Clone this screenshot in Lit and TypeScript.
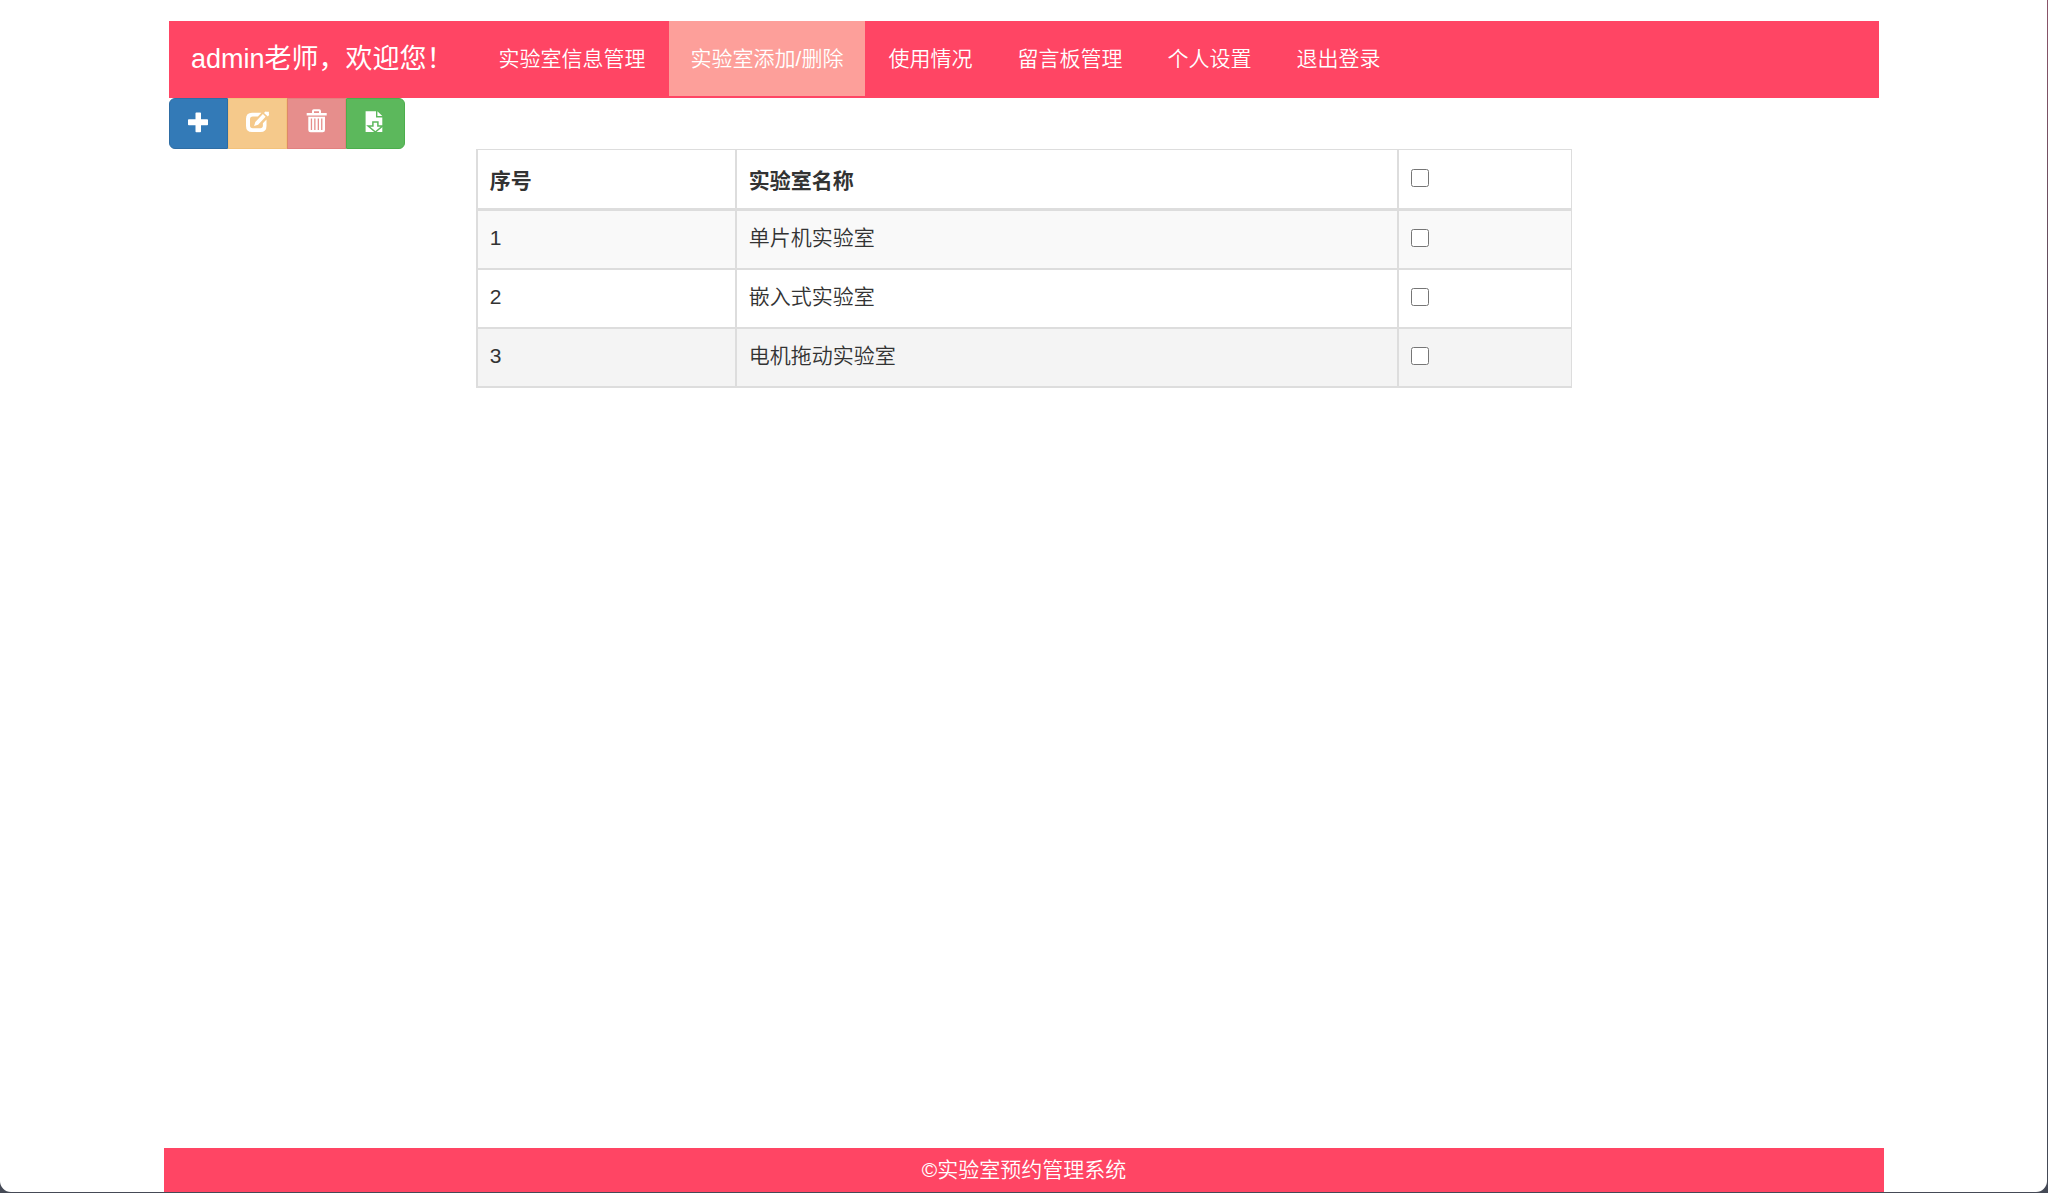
import { LitElement, html, svg, css } from "lit";
import { customElement, state } from "lit/decorators.js";

interface Lab {
  id: number;
  name: string;
}

const LABS: Lab[] = [
  { id: 1, name: "单片机实验室" },
  { id: 2, name: "嵌入式实验室" },
  { id: 3, name: "电机拖动实验室" },
];

const NAV = ["实验室信息管理", "实验室添加/删除", "使用情况", "留言板管理", "个人设置", "退出登录"];

const ICONS = {
  plus: svg`<path d="M8.3 3.5h3.9q.8 0 .8.8v6h6.200q.8 0 .8.8v4.400q0 .8-.8.8H13v6.100q0 .8-.8.8H8.300q-.8 0-.8-.8v-6.100H.8q-.8 0-.8-.8v-4.400q0-.8.8-.8h6.700v-6q0-.8.8-.8z"/>`,
  edit: svg`<path fill-rule="evenodd" d="M5 3.700h9.400l-3.500 3.700H5.800Q3 7.400 3 10.200v6.300q0 2.700 2.800 2.700h7.400q2.700 0 2.700-2.700v-2.200l3.600-3.700V17q0 6-6 6H5q-6 0-6-6V9.700q0-6 6-6z"/><path d="M15.300 5.300l2.700 2.600-7.500 8-4 1.300 1.200-4zM16.400 4.200l1.200-1.200q.6-.6 1.300 0h2.400v2.100q.6.7 0 1.300l-1.100 1.300z" transform="translate(.6 -.2)"/>`,
  trash: svg`<path fill-rule="evenodd" d="M.7 4h5.300V2Q6 .2 7.800.2h5.400Q15 .2 15 2v2h5.700v2.500H.7zM8 4h5V2.200H8zM2.300 7.700H19v13.200q0 2.400-2.300 2.400H4.600q-2.300 0-2.300-2.400zM4.800 9.500v11.500h1.300V9.500zM8.200 9.500v11.500h1.300V9.500zM11.700 9.500v11.500H13V9.500zM15.100 9.500v11.500h1.300V9.500z"/>`,
  save: svg`<path d="M.6 2.200H11v6.200h6.300V23H.6zM12.400 2.200l4.900 4.900h-4.900z"/><path class="arrow" d="M7.900 13h5v4.100h4.700l-7.200 6-7.200-6h4.700z"/>`,
};

@customElement("app-root")
export class AppRoot extends LitElement {
  @state() private selected = new Set<number>();

  static styles = css`
    :host {
      display: block;
      background: linear-gradient(#8a5468, #454a56 40%);
      font-family: "Liberation Sans", "Noto Sans CJK SC", sans-serif;
      font-size: 21px;
      line-height: 30px;
      color: #333;
    }
    .frame {
      box-sizing: border-box;
      min-height: 100vh;
      padding: 0 1px 1px 0;
      display: flex;
    }
    .page {
      box-sizing: border-box;
      flex: 1;
      display: flex;
      flex-direction: column;
      align-items: center;
      padding: 21px 0 0 1px;
      background: #fff;
      border-radius: 0 0 11px 11px;
    }
    .content {
      width: 100%;
      max-width: 1710px;
      flex: 1;
    }
    .navbar {
      display: flex;
      flex-wrap: wrap;
      gap: 1px;
      background: #ff4564;
    }
    .brand,
    .link {
      padding: 0 22px;
      line-height: 75px;
      color: #fff;
      text-decoration: none;
    }
    .brand {
      font-size: 27px;
      line-height: 77px;
    }
    .link {
      font-weight: 350;
    }
    .menu {
      display: flex;
      flex-wrap: wrap;
      gap: 1px;
      margin: 0;
      padding: 0 0 2px;
      list-style: none;
    }
    .item {
      display: flex;
    }
    .active {
      background: #fd9f9a;
    }
    .tools {
      display: flex;
    }
    .tool {
      display: block;
      margin: 0;
      padding: 10px 18px 15px;
      border: 1px solid;
      color: #fff;
      line-height: 0;
    }
    .tool:first-child {
      border-radius: 6px 0 0 6px;
    }
    .tool:last-child {
      border-radius: 0 6px 6px 0;
    }
    .tool:disabled {
      opacity: 0.65;
    }
    .icon {
      width: 21px;
      height: 24px;
      overflow: visible;
      fill: #fff;
    }
    .arrow {
      stroke: #5cb85c;
      stroke-width: 1.5;
    }
    .add {
      background: #337ab7;
      border-color: #2e6da4;
    }
    .edit {
      background: #f0ad4e;
      border-color: #eea236;
    }
    .remove {
      background: #d9534f;
      border-color: #d43f3a;
      border-left-color: #cc4a1a;
    }
    .export {
      background: #5cb85c;
      border-color: #4cae4c;
    }
    .table {
      width: calc(64% + 2px);
      margin: 0 auto;
      border-collapse: separate;
      border-spacing: 0;
      border: solid #ddd;
      border-width: 1px 0 0 2px;
      table-layout: fixed;
    }
    .col-id {
      width: 259px;
    }
    .col-check {
      width: 173px;
    }
    .cell {
      box-sizing: border-box;
      height: 59px;
      padding: 12px;
      border: solid #ddd;
      border-width: 0 2px 2px 0;
      text-align: left;
      vertical-align: top;
      font-weight: 350;
    }
    .cell:last-child {
      border-right-width: 1px;
    }
    .cell.num {
      font-weight: 400;
    }
    .cell.head {
      height: 61px;
      padding-top: 16px;
      border-bottom-width: 3px;
      font-weight: 700;
    }
    .cell.tick {
      padding-top: 13px;
    }
    .row:nth-child(odd) {
      background: #f9f9f9;
    }
    .row:last-child {
      background: #f4f4f4;
    }
    .check {
      display: block;
      width: 18px;
      height: 18px;
      margin: 6px 0;
    }
    .footer {
      width: 100%;
      max-width: 1720px;
      background: #ff4564;
      color: #fff;
      font-weight: 350;
      line-height: 44px;
      text-align: center;
    }
  `;

  private toggle(id: number) {
    const next = new Set(this.selected);
    next.has(id) ? next.delete(id) : next.add(id);
    this.selected = next;
  }

  private toggleAll() {
    this.selected = this.selected.size === LABS.length ? new Set() : new Set(LABS.map((l) => l.id));
  }

  private tool(kind: string, icon: keyof typeof ICONS, label: string, disabled = false) {
    return html`<button class="tool ${kind}" type="button" aria-label=${label} ?disabled=${disabled}>
      <svg class="icon" viewBox="0 0 21 24" aria-hidden="true">${ICONS[icon]}</svg>
    </button>`;
  }

  render() {
    const count = this.selected.size;
    return html`<div class="frame">
      <div class="page">
        <div class="content">
          <nav class="navbar">
            <a class="brand" href="#">admin老师，欢迎您！</a>
            <ul class="menu">
              ${NAV.map(
                (text, i) => html`<li class="item"><a class="link ${i === 1 ? "active" : ""}" href="#">${text}</a></li>`,
              )}
            </ul>
          </nav>
          <div class="tools">
            ${this.tool("add", "plus", "添加")}
            ${this.tool("edit", "edit", "编辑", count !== 1)}
            ${this.tool("remove", "trash", "删除", count === 0)}
            ${this.tool("export", "save", "导出")}
          </div>
          <table class="table">
            <colgroup>
              <col class="col-id" />
              <col />
              <col class="col-check" />
            </colgroup>
            <thead>
              <tr>
                <th class="cell head">序号</th>
                <th class="cell head">实验室名称</th>
                <th class="cell head tick">
                  <input
                    class="check"
                    type="checkbox"
                    aria-label="全选"
                    .checked=${count === LABS.length}
                    @change=${this.toggleAll}
                  />
                </th>
              </tr>
            </thead>
            <tbody>
              ${LABS.map(
                (lab) => html`<tr class="row">
                  <td class="cell num">${lab.id}</td>
                  <td class="cell">${lab.name}</td>
                  <td class="cell">
                    <input
                      class="check"
                      type="checkbox"
                      aria-label=${lab.name}
                      .checked=${this.selected.has(lab.id)}
                      @change=${() => this.toggle(lab.id)}
                    />
                  </td>
                </tr>`,
              )}
            </tbody>
          </table>
        </div>
        <footer class="footer">©实验室预约管理系统</footer>
      </div>
    </div>`;
  }
}
